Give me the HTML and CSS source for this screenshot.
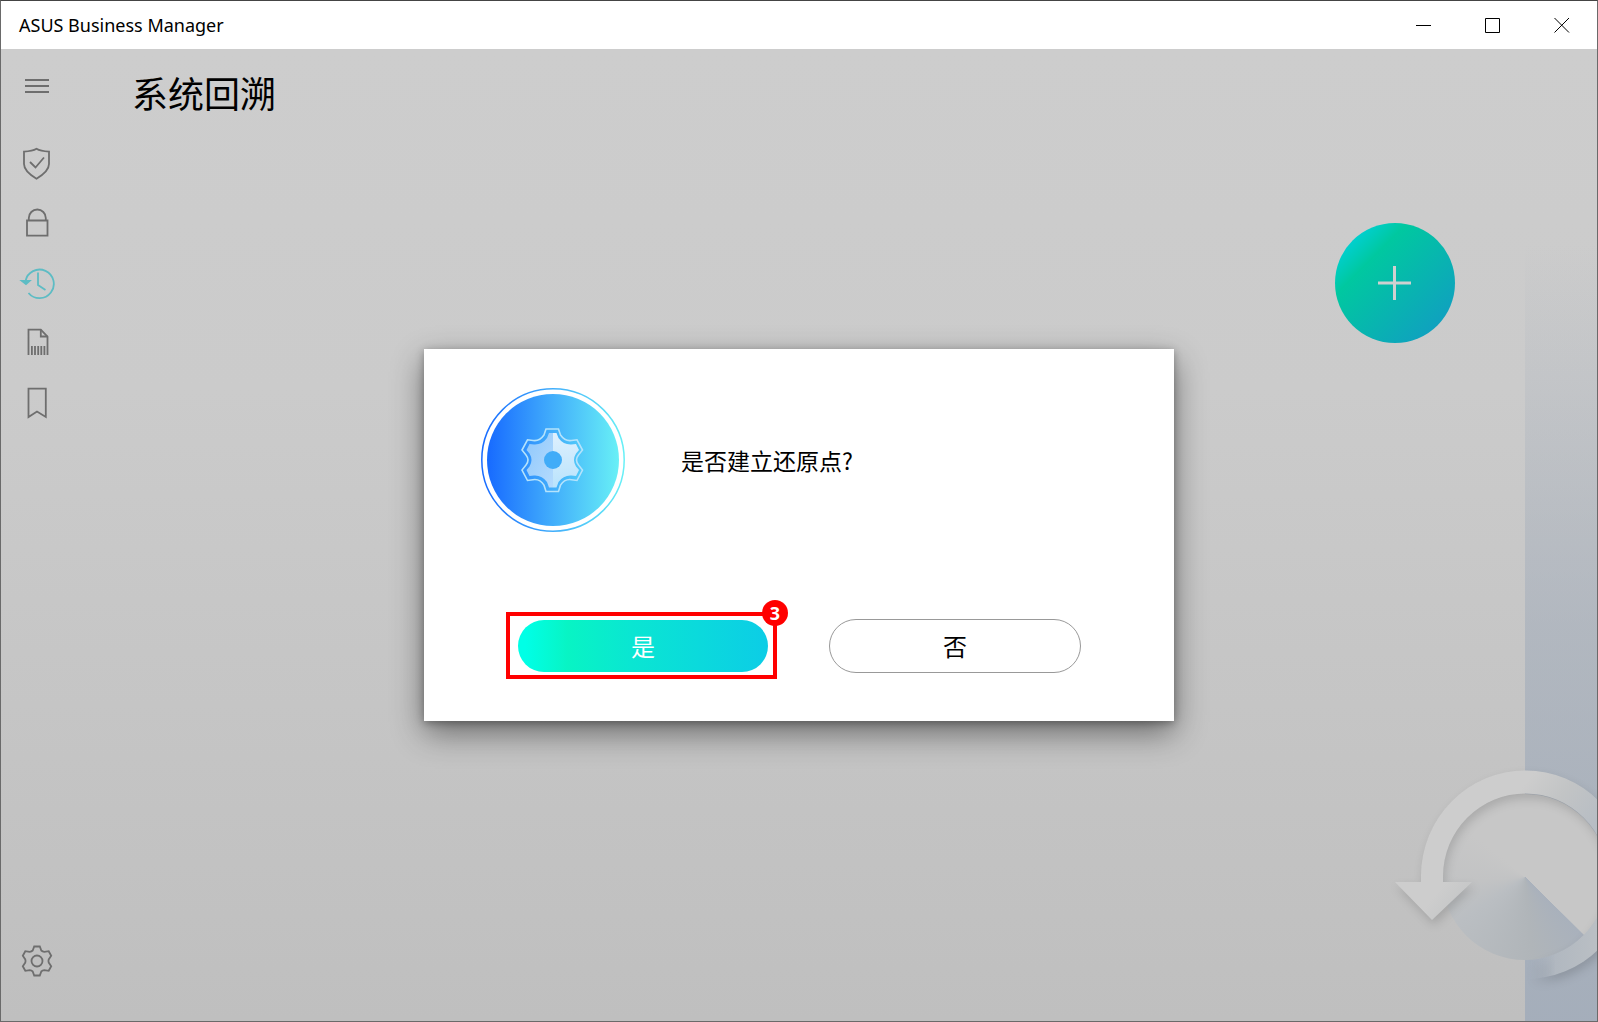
FILE: index.html
```html
<!DOCTYPE html>
<html lang="zh-CN">
<head>
    <meta charset="UTF-8">
    <meta name="viewport" content="width=device-width, initial-scale=1.0">
    <title>ASUS Business Manager</title>
    <link rel="stylesheet" href="styles.css">
</head>
<body>
    <div class="window">
        <header class="titlebar">
            <span class="app-name">ASUS Business Manager</span>
            <div class="window-controls">
                <button type="button" aria-label="最小化">
                    <svg width="16" height="16" viewBox="0 0 16 16"><path d="M0 8.500h15"/></svg>
                </button>
                <button type="button" aria-label="最大化">
                    <svg width="16" height="16" viewBox="0 0 16 16"><path d="M.5 1.500h14v14h-14z"/></svg>
                </button>
                <button type="button" aria-label="关闭">
                    <svg width="16" height="16" viewBox="0 0 16 16"><path d="M.5 1l14.500 14.500M15 1L.5 15.500"/></svg>
                </button>
            </div>
        </header>

        <div class="content">
            <aside class="sidebar">
                <button type="button" class="menu-button" aria-label="菜单">
                    <svg width="36" height="36" viewBox="0 0 36 36"><path d="M6 12h24M6 18h24M6 24h24"/></svg>
                </button>
                <nav>
                    <a href="#" aria-label="安全">
                        <svg width="36" height="36" viewBox="0 0 36 36"><path d="M17.500 3.800c-3.600 2.200-7.600 2.600-12.500 2.800v12.500c0 6 5.500 10.500 12.500 14.700 7-4.200 12.500-8.700 12.500-14.700V6.600c-4.900-.2-8.900-.6-12.500-2.800z"/><path d="M11 17l5.500 5.500 8.500-10"/></svg>
                    </a>
                    <a href="#" aria-label="锁定">
                        <svg width="36" height="36" viewBox="0 0 36 36"><path d="M8 15.500h20.500v15.200H8z"/><path d="M9.800 15.500v-2.500a8.500 8.500 0 0 1 17 0v2.500"/></svg>
                    </a>
                    <a href="#" class="active" aria-label="系统回溯">
                        <svg width="36" height="36" viewBox="0 0 36 36"><path d="M6.500 16A14.300 14.300 0 1 1 9.500 28"/><path d="M19 7.500v12.500l7.500 5"/><path class="fill" d="M3 16h7.500l-3.500 3z"/></svg>
                    </a>
                    <a href="#" aria-label="文件粉碎">
                        <svg width="36" height="36" viewBox="0 0 36 36"><path d="M9.500 30V4.700h12.300l6.700 6.800V30"/><path d="M21.800 4.700v6.800h6.700"/><path d="M12.900 21v9M16 21v9M19.200 21v9M22.300 21v9M25.400 21v9"/></svg>
                    </a>
                    <a href="#" aria-label="书签">
                        <svg width="36" height="36" viewBox="0 0 36 36"><path d="M9.500 3.700h17.300V32L18 26.500 9.500 32z"/></svg>
                    </a>
                </nav>
                <button type="button" class="settings-button" aria-label="设置">
                    <svg width="36" height="36" viewBox="0 0 36 36"><path d="M15.200 3.500h5.600l1.500 4q1.200 1.200 3 1.300l4.400-.6 2.500 4.600-2.500 3.600q-.5 1.600 0 3.200l2.500 3.600-2.500 4.600-4.400-.6q-1.800.1-3 1.300L20.800 32.500h-5.600l-1.500-4q-1.200-1.200-3-1.300l-4.400.6-2.500-4.600 2.500-3.600q.5-1.600 0-3.200l-2.500-3.600 2.500-4.600 4.400.6q1.800-.1 3-1.300z"/><circle cx="18" cy="18" r="5.500"/></svg>
                </button>
            </aside>

            <main>
                <h1>系统回溯</h1>
                <button type="button" class="add-button" aria-label="新建">
                    <svg width="34" height="34" viewBox="0 0 34 34"><path d="M0 17h33M16.500 0v34"/></svg>
                </button>
            </main>

            <div class="side-band"></div>

            <svg class="restore-art" width="212" height="230" viewBox="0 0 212 230">
                <defs>
                    <linearGradient id="arcTop" gradientUnits="userSpaceOnUse" x1="150" y1="10" x2="212" y2="60">
                        <stop offset="0" stop-color="#cdcdcd"/>
                        <stop offset=".45" stop-color="#c2c4c5"/>
                        <stop offset="1" stop-color="#b7bdc4"/>
                    </linearGradient>
                    <linearGradient id="arcBottom" gradientUnits="userSpaceOnUse" x1="144" y1="0" x2="212" y2="0">
                        <stop offset="0" stop-color="#a8b1bd" stop-opacity="0"/>
                        <stop offset=".4" stop-color="#b1b8c0"/>
                        <stop offset="1" stop-color="#babfc4"/>
                    </linearGradient>
                </defs>
                <foreignObject x="57" y="33" width="166" height="166">
                    <div class="restore-disc"></div>
                </foreignObject>
                <path class="arc" fill="url(#arcBottom)" d="M245 115a105 103 0 0 1-105 103v-19a84 84 0 0 0 83-84z"/>
                <path class="arc" fill="url(#arcTop)" d="M36 121V115a104 105 0 0 1 209 0h-22a82 82 0 0 0-165 0v6h29l-40 38-37-38z"/>
            </svg>

            <div class="dialog-layer">
                <div class="dialog" role="dialog" aria-modal="true" aria-labelledby="dialogText">
                    <div class="dialog-message">
                        <svg width="144" height="144" viewBox="0 0 144 144">
                            <defs>
                                <linearGradient id="blue" x1="0" x2="1" y1="0" y2="0">
                                    <stop offset="0" stop-color="#176aff"/>
                                    <stop offset=".5" stop-color="#42aefb"/>
                                    <stop offset="1" stop-color="#68f0f6"/>
                                </linearGradient>
                                <linearGradient id="gearLeft" x1="0" x2="1" y1="0" y2="1">
                                    <stop offset="0" stop-color="#8fc8fc"/>
                                    <stop offset="1" stop-color="#b5dbfd"/>
                                </linearGradient>
                                <linearGradient id="gearRight" x1="0" x2="0" y1="0" y2="1">
                                    <stop offset="0" stop-color="#def0fe"/>
                                    <stop offset="1" stop-color="#b9e3fc"/>
                                </linearGradient>
                            </defs>
                            <circle cx="72" cy="72" r="71.200" fill="none" stroke="url(#blue)" stroke-width="1.500"/>
                            <circle cx="72" cy="72" r="66" fill="url(#blue)"/>
                            <path fill="none" stroke="#b5e3fc" stroke-width="1.600" d="M65 41h12.500l2 6q4.500 6.500 11 5.500l5.500-.7 5.500 10.200-4 5q-4 5 0 10l4 5-5.500 10.500-5.500-.8q-7-1-11 5.500l-2 6.300H65l-2-6.300q-4-6.500-11-5.500l-5.500.8L41 82l4-5q4-5 0-10l-4-5L46.500 51.800l5.500.7q6.500 1 11-5.500z"/>
                            <path fill="url(#gearLeft)" d="M72 45h-4l-2 5q-5 7-13 6.500l-4.500-.5-3 6 3 3.500q4 6.500 0 13l-3 3.500 3 6 4.500-.5q8-.5 13 6.500l2 5.500h4z"/>
                            <path fill="url(#gearRight)" d="M72 45h3.500l2 5q5 7 13 6.500l4.500-.5 3 6-3 3.500q-4 6.500 0 13l3 3.500-3 6-4.500-.5q-8-.5-13 6.500l-2 5.500H72z"/>
                            <circle cx="72" cy="72" r="9" fill="#41acf8"/>
                        </svg>
                        <p id="dialogText">是否建立还原点?</p>
                    </div>
                    <div class="dialog-buttons">
                        <div class="step">
                            <button type="button" class="yes">是</button>
                            <div class="step-frame"></div>
                            <span class="step-number">3</span>
                        </div>
                        <button type="button" class="no">否</button>
                    </div>
                </div>
            </div>
        </div>
    </div>
</body>
</html>
```
FILE: styles.css
```css
* {
    box-sizing: border-box;
}

body {
    margin: 0;
    font-family: "Noto Sans", "Noto Sans CJK SC", sans-serif;
    color: #000;
}

button {
    padding: 0;
    border: none;
    background: none;
    font-family: "Noto Sans CJK SC", sans-serif;
    cursor: pointer;
}

svg {
    display: block;
}

.window {
    display: flex;
    flex-direction: column;
    min-height: 100vh;
    border: 1px solid #6a6a6a;
    border-top-color: #444;
}

.titlebar {
    display: flex;
    align-items: center;
    justify-content: space-between;
    height: 48px;
    padding-left: 18px;
    background: #fff;
}

.app-name {
    font-size: 18px;
}

.window-controls {
    display: flex;
    height: 100%;
    padding-right: 1px;
}

.window-controls button {
    display: flex;
    align-items: center;
    justify-content: center;
    width: 69px;
}

.window-controls path {
    fill: none;
    stroke: #000;
    stroke-width: 1;
}

.content {
    position: relative;
    display: flex;
    flex: 1;
    overflow: hidden;
    background: linear-gradient(#cdcdcd 0%, #cbcbcb 35%, #bfbfbf 100%);
}

/* left navigation */
.sidebar {
    display: flex;
    flex-direction: column;
    width: 72px;
    padding-bottom: 30px;
}

.sidebar a,
.sidebar button {
    display: flex;
    align-items: center;
    justify-content: center;
    height: 60px;
}

.sidebar .menu-button {
    height: 74px;
    margin-bottom: 10px;
}

.settings-button {
    margin-top: auto;
}

.sidebar svg {
    fill: none;
    stroke: #6e6e6e;
    stroke-width: 1.8;
}

.sidebar .active svg {
    stroke: #5dbcc4;
}

.sidebar .active .fill {
    fill: #5dbcc4;
}

main {
    display: flex;
    flex: 1;
    align-items: flex-start;
    justify-content: space-between;
    padding: 17px 70px 0 59px;
}

h1 {
    margin: 0;
    font-family: "Noto Sans CJK SC", sans-serif;
    font-size: 36px;
    font-weight: 400;
    line-height: 52px;
}

.add-button {
    display: flex;
    align-items: center;
    justify-content: center;
    width: 120px;
    height: 120px;
    margin-top: 157px;
    border-radius: 50%;
    background: linear-gradient(135deg, #00d2dc 10%, #00c8a0 30%, #10a0c0 88%);
}

.add-button path {
    stroke: #d0d0d0;
    stroke-width: 3;
}

.side-band {
    width: 72px;
    background: linear-gradient(rgba(160, 171, 186, 0) 20%, rgba(160, 171, 186, 0.55) 60%, rgba(160, 171, 186, 0.85) 100%);
}

.restore-art {
    position: absolute;
    right: 0;
    bottom: 30px;
}

.restore-disc {
    width: 166px;
    height: 166px;
    border-radius: 50%;
    background: conic-gradient(#c7c7c7 0deg 134deg, #a9b1bc 135deg, #b0b5b9 175deg, #babec2 235deg, #c2c3c4 265deg, #c7c7c7 310deg);
}

.arc {
    filter: drop-shadow(2px 5px 5px rgba(0, 0, 0, 0.14));
}

/* confirm dialog */
.dialog-layer {
    position: absolute;
    inset: 0;
    display: flex;
    align-items: center;
    justify-content: center;
}

.dialog {
    width: 750px;
    padding: 39px 57px 48px;
    background: #fff;
    box-shadow: 0 12px 30px rgba(0, 0, 0, 0.45), 0 2px 8px rgba(0, 0, 0, 0.3);
}

.dialog-message {
    display: flex;
    align-items: center;
    gap: 56px;
}

.dialog-message p {
    margin: 0;
    font-family: "Noto Sans CJK SC", sans-serif;
    font-size: 23px;
}

.dialog-buttons {
    display: flex;
    align-items: center;
    gap: 61px;
    margin-top: 87px;
    padding-left: 37px;
}

.dialog-buttons button {
    display: block;
    padding-bottom: 2px;
    border-radius: 27px;
    font-size: 24px;
}

.yes {
    width: 250px;
    height: 52px;
    background: linear-gradient(90deg, #00ffe6 3%, #08f4c4 20%, #0ae6d2 45%, #0ccde6 100%);
    color: #fff;
}

.no {
    width: 252px;
    height: 54px;
    border: 1px solid #999;
    color: #000;
}

/* numbered step marker around a button */
.step {
    position: relative;
}

.step-frame {
    position: absolute;
    inset: -8px -9px -7px -12px;
    border: 4px solid #f00;
    pointer-events: none;
}

.step-number {
    position: absolute;
    top: -20px;
    right: -20px;
    width: 26px;
    height: 26px;
    border-radius: 50%;
    background: #f00;
    color: #fff;
    font-family: "Open Sans", sans-serif;
    font-size: 18px;
    font-weight: 700;
    line-height: 26px;
    text-align: center;
}
```
